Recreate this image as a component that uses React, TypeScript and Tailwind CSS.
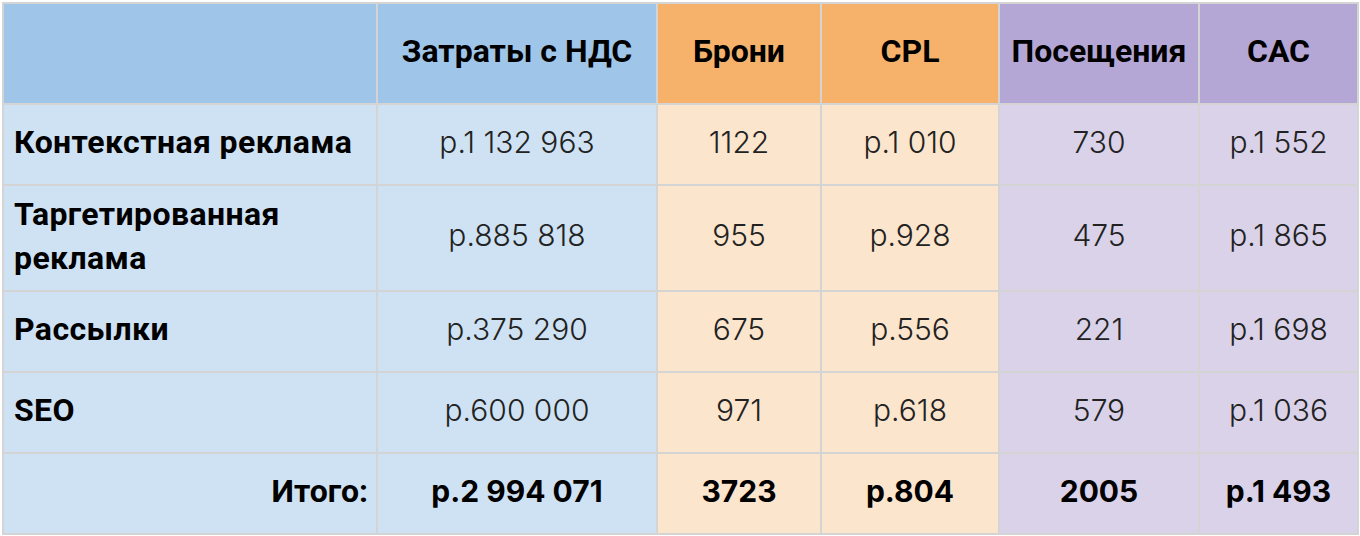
const rows = [
  { name: "Контекстная реклама", cost: "р.1 132 963", bookings: "1122", cpl: "р.1 010", visits: "730", cac: "р.1 552", tall: false },
  { name: "Таргетированная реклама", cost: "р.885 818", bookings: "955", cpl: "р.928", visits: "475", cac: "р.1 865", tall: true },
  { name: "Рассылки", cost: "р.375 290", bookings: "675", cpl: "р.556", visits: "221", cac: "р.1 698", tall: false },
  { name: "SEO", cost: "р.600 000", bookings: "971", cpl: "р.618", visits: "579", cac: "р.1 036", tall: false },
];

const cell = "border-2 border-[#d4d4d4] text-center px-0 pt-0 pb-[5px]";
const num = "font-['Inter',sans-serif] font-light text-[30px] text-[#222]";

export default function App() {
  return (
    <div className="bg-white w-[1360px] h-[536px] pt-[2px] pl-[2px]">
      <table className="border-collapse table-fixed w-[1355px] text-black">
        <colgroup>
          <col className="w-[374px]" />
          <col className="w-[280px]" />
          <col className="w-[164px]" />
          <col className="w-[178px]" />
          <col className="w-[200px]" />
          <col className="w-[159px]" />
        </colgroup>
        <thead>
          <tr className="h-[101px] font-['Roboto',sans-serif] font-bold text-[32px]">
            <th className={`${cell} bg-[#9fc5e8]`}></th>
            <th className={`${cell} bg-[#9fc5e8]`}>Затраты с НДС</th>
            <th className={`${cell} bg-[#f6b26b]`}>Брони</th>
            <th className={`${cell} bg-[#f6b26b]`}>CPL</th>
            <th className={`${cell} bg-[#b4a7d6]`}>Посещения</th>
            <th className={`${cell} bg-[#b4a7d6]`}>CAC</th>
          </tr>
        </thead>
        <tbody>
          {rows.map((r) => (
            <tr key={r.name} className={r.tall ? "h-[106px]" : "h-[81px]"}>
              <td className="border-2 border-[#d4d4d4] bg-[#cfe2f3] pl-[10px] pr-2 pt-0 pb-[5px] text-left font-['Roboto',sans-serif] font-bold text-[32px] tracking-[0.4px] leading-[44px]">
                {r.name}
              </td>
              <td className={`${cell} ${num} bg-[#cfe2f3]`}>{r.cost}</td>
              <td className={`${cell} ${num} bg-[#fce5cd]`}>{r.bookings}</td>
              <td className={`${cell} ${num} bg-[#fce5cd]`}>{r.cpl}</td>
              <td className={`${cell} ${num} bg-[#d9d2e9]`}>{r.visits}</td>
              <td className={`${cell} ${num} bg-[#d9d2e9]`}>{r.cac}</td>
            </tr>
          ))}
          <tr className="h-[81px] font-['Inter',sans-serif] font-bold text-[30px]">
            <td className="border-2 border-[#d4d4d4] bg-[#cfe2f3] text-right pr-[8px] pt-0 pb-[5px] font-['Roboto',sans-serif] text-[32px]">Итого:</td>
            <td className={`${cell} bg-[#cfe2f3]`}>р.2 994 071</td>
            <td className={`${cell} bg-[#fce5cd]`}>3723</td>
            <td className={`${cell} bg-[#fce5cd]`}>р.804</td>
            <td className={`${cell} bg-[#d9d2e9]`}>2005</td>
            <td className={`${cell} bg-[#d9d2e9]`}>р.1 493</td>
          </tr>
        </tbody>
      </table>
    </div>
  );
}
